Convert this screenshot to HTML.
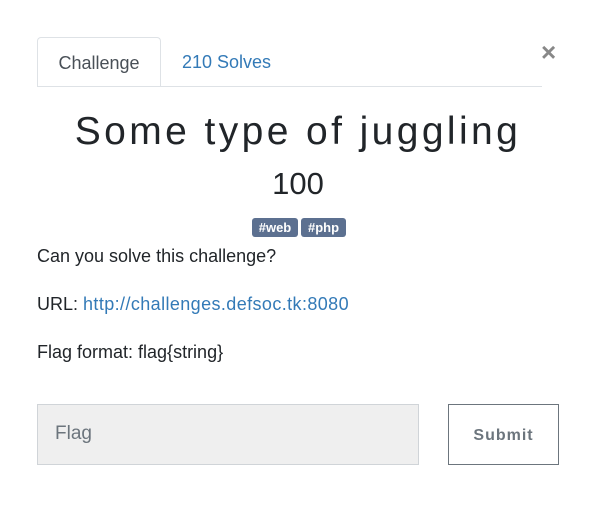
<!DOCTYPE html>
<html><head><style>
body{margin:0;width:596px;height:522px;background:#fff;font-family:"Liberation Sans",sans-serif;color:#212529;position:relative;overflow:hidden}
.a{position:absolute}
.tab1{left:37px;top:37px;width:124px;height:50px;border:1px solid #dee2e6;border-bottom:none;border-radius:4px 4px 0 0;background:#fff;box-sizing:border-box;text-align:center;line-height:50px;font-size:18px;color:#495057}
.line{left:37px;top:86px;width:505px;height:1px;background:#dee2e6}
.tab2{left:182px;top:52px;font-size:18px;color:#337ab7}
.x{left:541px;top:37px;font-size:26px;font-weight:bold;color:#888}
.title{left:0;width:596px;top:110px;text-align:center;font-size:39px;letter-spacing:3.4px;font-weight:300}
.pts{left:0;width:596px;top:166px;text-align:center;font-size:31px}
.tag{top:218px;height:19px;background:#5c7090;color:#fff;font-size:13px;font-weight:bold;border-radius:3px;line-height:19px;text-align:center}
p{position:absolute;margin:0;left:37px;font-size:18px}
a{color:#337ab7;text-decoration:none;letter-spacing:0.4px}
.inp{left:37px;top:404px;width:382px;height:61px;background:#efefef;border:1px solid #d0d4d8;box-sizing:border-box;font-size:19px;color:#6c757d;padding:18px 0 0 17px}
.btn{left:448px;top:404px;width:111px;height:61px;border:1px solid #6c757d;box-sizing:border-box;text-align:center;line-height:62px;font-size:16px;font-weight:bold;color:#6c757d;letter-spacing:1px}
</style></head><body>
<div class="a tab1">Challenge</div>
<div class="a line"></div>
<div class="a tab2">210 Solves</div>
<div class="a x">×</div>
<div class="a title">Some type of juggling</div>
<div class="a pts">100</div>
<div class="a tag" style="left:252px;width:46px">#web</div>
<div class="a tag" style="left:301px;width:45px">#php</div>
<p style="top:246px">Can you solve this challenge?</p>
<p style="top:294px">URL: <a>http://challenges.defsoc.tk:8080</a></p>
<p style="top:342px">Flag format: flag{string}</p>
<div class="a inp">Flag</div>
<div class="a btn">Submit</div>
</body></html>
